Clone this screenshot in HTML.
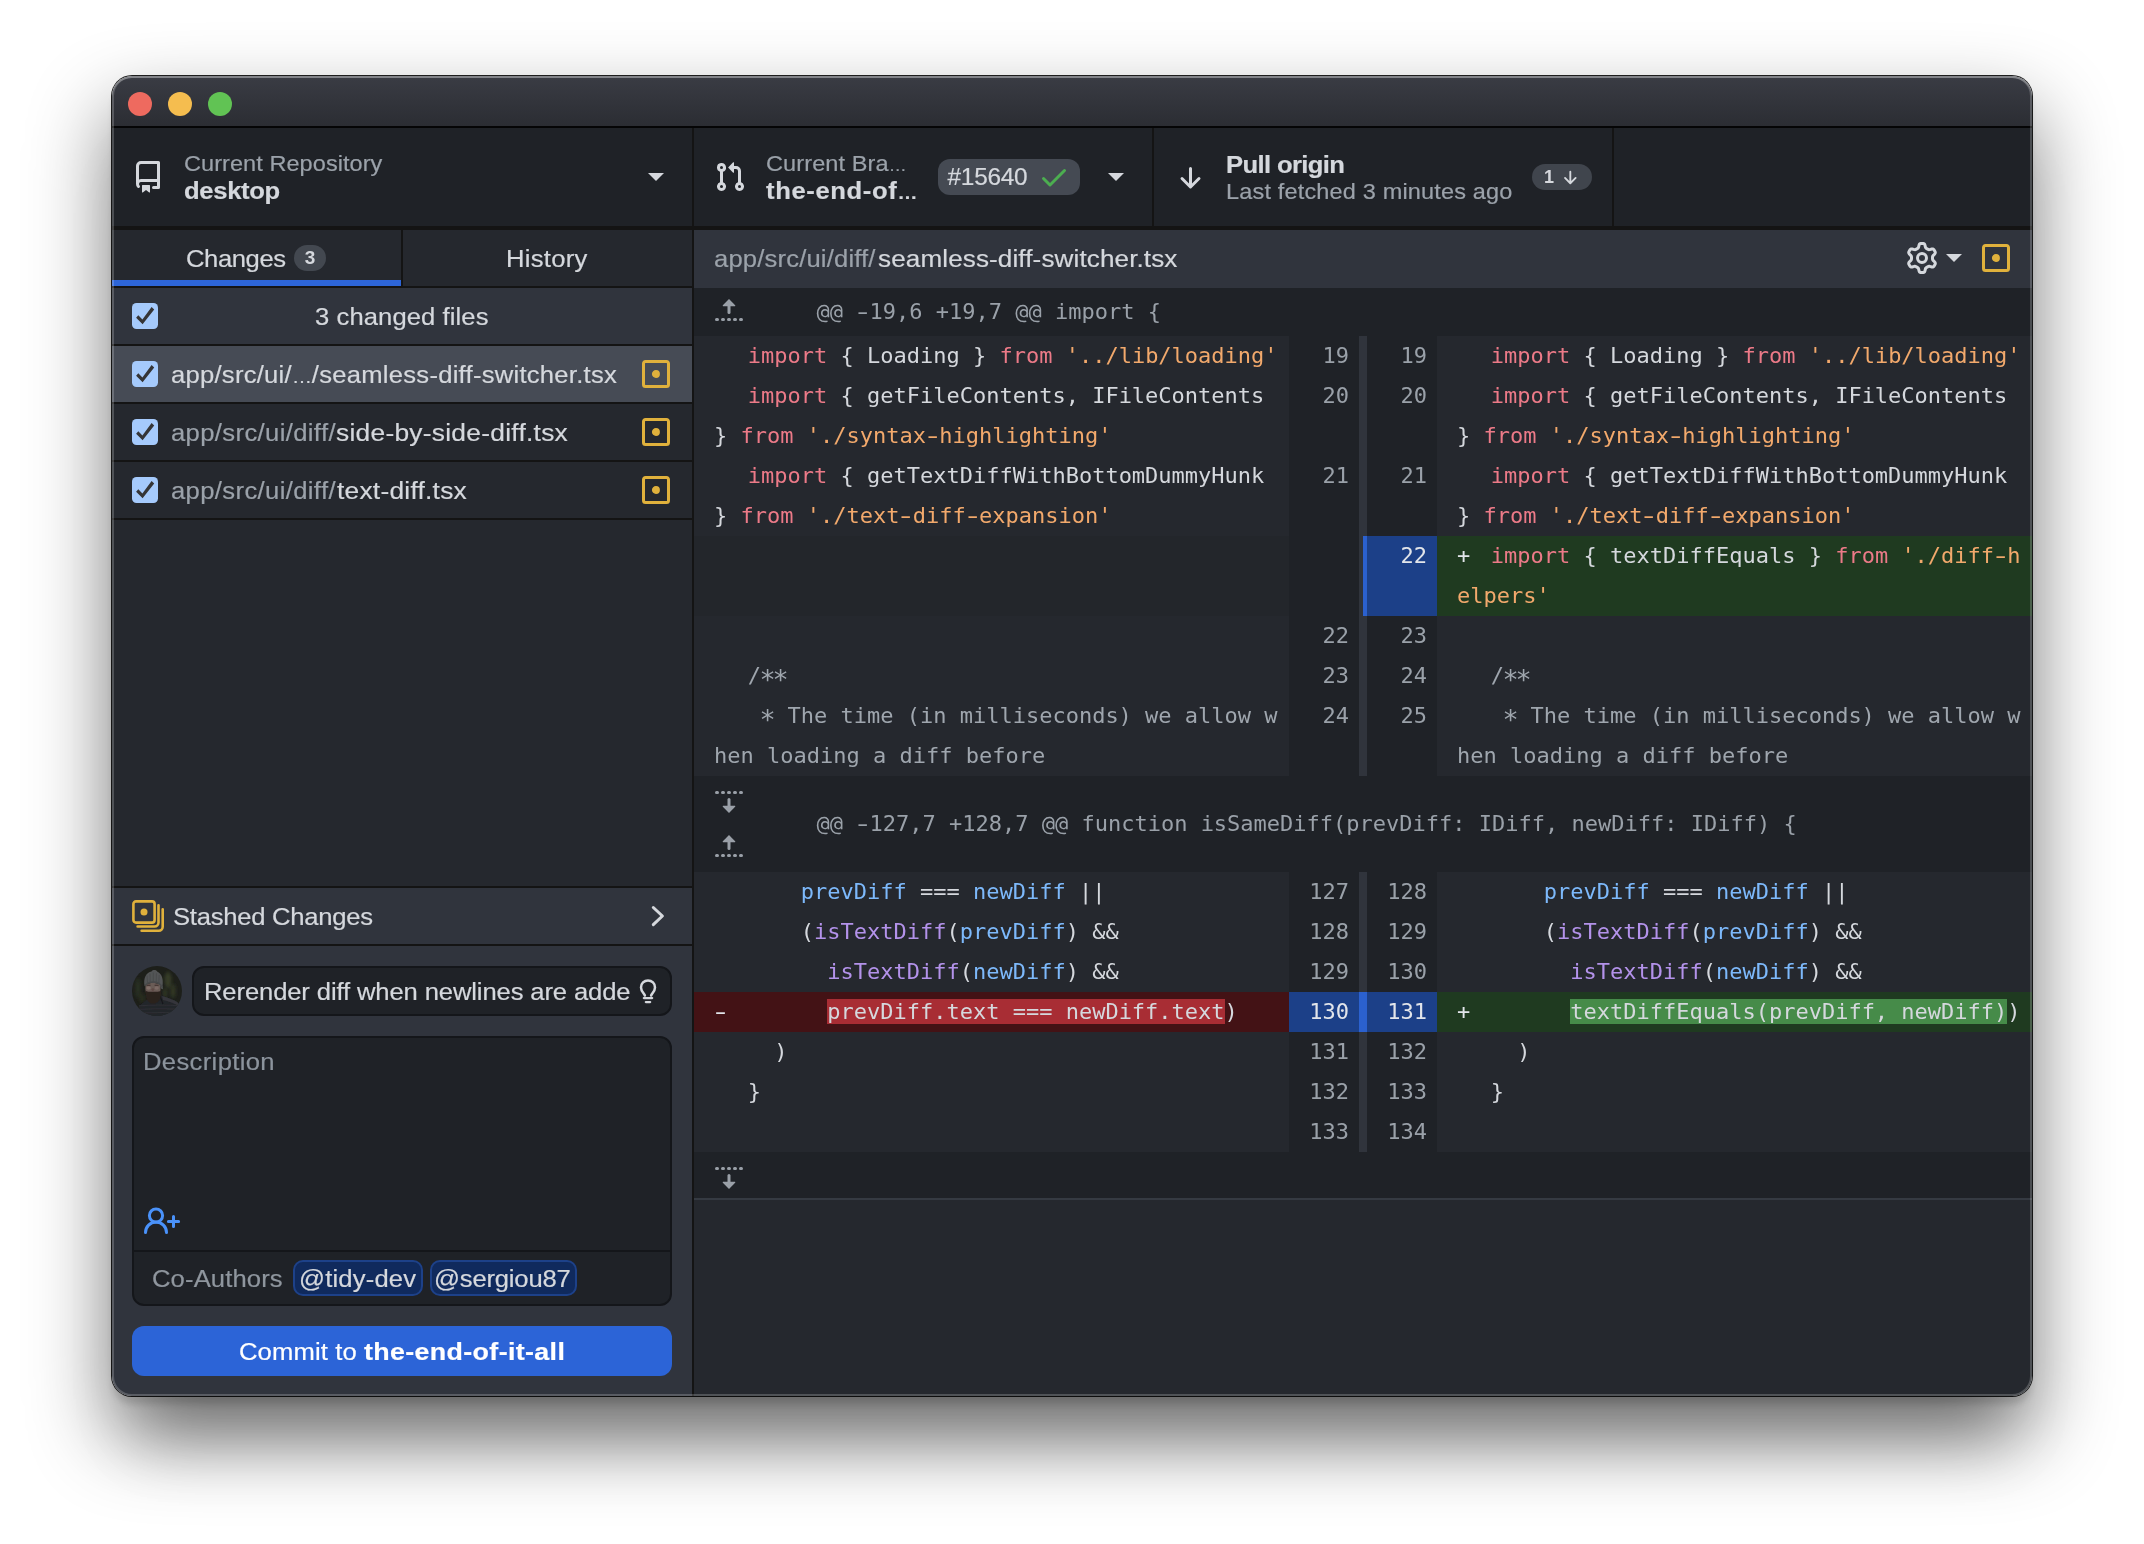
<!DOCTYPE html>
<html lang="en">
<head>
<meta charset="utf-8">
<title>GitHub Desktop</title>
<style>
html,body{margin:0;padding:0;}
html{width:2144px;height:1544px;background:#fff;}
body{width:2144px;height:1544px;background:#fff;position:relative;overflow:hidden;
  font-family:"Liberation Sans",sans-serif;font-size:24px;color:#d5d8dd;-webkit-font-smoothing:antialiased;}
#app div,#app svg{position:absolute;box-sizing:border-box;}
#shadow{position:absolute;left:112px;top:76px;width:1920px;height:1320px;border-radius:20px;
  box-shadow:0 0 0 1px rgba(0,0,0,.88), 0 9px 6px -1px rgba(0,0,0,.12), 0 70px 65px -35px rgba(0,0,0,.25), 0 38px 78px 6px rgba(0,0,0,.44);}
#app{position:absolute;left:0;top:0;width:2144px;height:1544px;
  clip-path:inset(76px 112px 148px 112px round 20px);background:#25282e;will-change:transform;}
#rim{position:absolute;left:112px;top:76px;width:1920px;height:1320px;border-radius:20px;
  box-shadow:inset 0 0 0 2px rgba(255,255,255,.2), inset 0 2px 0 0 rgba(255,255,255,.22);pointer-events:none;}
.t{white-space:pre;line-height:28px;height:28px;}
.b{font-weight:700;}
.sec{color:#9ba2aa;}
.mono{font-family:"DejaVu Sans Mono","Liberation Mono",monospace;font-size:22px;}
svg{display:block;}
/* title bar */
#titlebar{left:112px;top:76px;width:1920px;height:50px;background:linear-gradient(#393b43,#2b2d33);}
#tb-border{left:112px;top:126px;width:1920px;height:2px;background:#050505;}
.tl{width:24px;height:24px;border-radius:12px;top:92px;}
/* toolbar */
#toolbar{left:112px;top:128px;width:1920px;height:98px;background:#1f2227;}
#toolbar-border{left:112px;top:226px;width:1920px;height:4px;background:#141414;}
.vsep{width:2px;background:#141414;}
.pill{background:#454a53;border-radius:12px;}
/* sidebar */
#sidebar{left:112px;top:230px;width:580px;height:1166px;background:#25282e;}
.hline{height:2px;background:#141414;}
.cb{width:26px;height:26px;border-radius:5px;background:#a4c8fb;}
.row{left:112px;width:580px;height:56px;}
.boxalt{background:#30343d;}
/* diff */
.code{background:#25282e;}
.gut{background:#1f2227;}
.ln{font-family:"DejaVu Sans Mono","Liberation Mono",monospace;font-size:22px;color:#9aa1a9;white-space:pre;line-height:40px;height:40px;text-align:right;}
.cl{font-family:"DejaVu Sans Mono","Liberation Mono",monospace;font-size:22px;color:#d5d8dd;white-space:pre;line-height:40px;height:40px;}
.k{color:#ec7a88;}.s{color:#f2a96c;}.v{color:#7db9fb;}.f{color:#b392ea;}.c{color:#9fa6ae;}
.hy{display:inline-block;transform:scaleX(1.5);}
.as{display:inline-block;transform:translateY(4.5px) scale(1.22);}
</style>
</head>
<body>
<div id="shadow"></div>
<div id="app">
<div style="left:112px;top:76px;width:1920px;height:50px;background:linear-gradient(#3a3c44,#2b2d33);"></div>
<div style="left:112px;top:126px;width:1920px;height:2px;background:#050506;"></div>
<div style="left:128px;top:92px;width:24px;height:24px;background:#ee6a5f;border-radius:12px;"></div>
<div style="left:168px;top:92px;width:24px;height:24px;background:#f5bd4f;border-radius:12px;"></div>
<div style="left:208px;top:92px;width:24px;height:24px;background:#61c354;border-radius:12px;"></div>
<div style="left:112px;top:128px;width:1920px;height:98px;background:#1f2227;"></div>
<div style="left:112px;top:226px;width:1920px;height:4px;background:#141414;"></div>
<div style="left:692px;top:128px;width:2px;height:98px;background:#141414;"></div>
<div style="left:1152px;top:128px;width:2px;height:98px;background:#141414;"></div>
<div style="left:1612px;top:128px;width:2px;height:98px;background:#141414;"></div>
<svg style="left:132px;top:161px;" width="32" height="32" viewBox="0 0 16 16" fill="#d5d8dd" ><path d="M2 2.5A2.5 2.5 0 0 1 4.5 0h8.75a.75.75 0 0 1 .75.75v12.5a.75.75 0 0 1-.75.75h-2.5a.75.75 0 0 1 0-1.5h1.75v-2h-8a1 1 0 0 0-.714 1.7.75.75 0 1 1-1.072 1.05A2.495 2.495 0 0 1 2 11.5Zm10.5-1h-8a1 1 0 0 0-1 1v6.708A2.486 2.486 0 0 1 4.5 9h8ZM5 12.25a.25.25 0 0 1 .25-.25h3.5a.25.25 0 0 1 .25.25v3.25a.25.25 0 0 1-.4.2l-1.45-1.087a.249.249 0 0 0-.3 0L5.4 15.7a.25.25 0 0 1-.4-.2Z"/></svg>
<div class="t" id="tx_repo_desc" style="left:183.84px;top:150.13px;font-size:22.4px;color:#9ba2aa;transform:scaleX(1.05);transform-origin:0 0;-webkit-text-stroke:0.2px #9ba2aa;letter-spacing:0.060px;">Current Repository</div>
<div class="t" id="tx_repo_title" style="left:183.85px;top:176.68px;font-size:24.4px;color:#d5d8dd;transform:scaleX(1.05);transform-origin:0 0;-webkit-text-stroke:0.2px #d5d8dd;font-weight:700;letter-spacing:-0.308px;">desktop</div>
<svg style="left:648px;top:173px;" width="16" height="8" viewBox="0 0 16 8"><polygon points="0,0 16,0 8.0,8" fill="#d5d8dd"/></svg>
<svg style="left:714px;top:161px;" width="32" height="32" viewBox="0 0 16 16" fill="#d5d8dd" ><path fill-rule="evenodd" d="M7.177 3.073L9.573.677A.25.25 0 0110 .854v4.792a.25.25 0 01-.427.177L7.177 3.427a.25.25 0 010-.354zM3.75 2.5a.75.75 0 100 1.5.75.75 0 000-1.5zm-2.25.75a2.25 2.25 0 113 2.122v5.256a2.251 2.251 0 11-1.5 0V5.372A2.25 2.25 0 011.5 3.25zM11 2.5h-1V4h1a1 1 0 011 1v5.628a2.251 2.251 0 101.5 0V5A2.5 2.5 0 0011 2.5zm1 10.25a.75.75 0 111.5 0 .75.75 0 01-1.5 0zM3.75 12a.75.75 0 100 1.5.75.75 0 000-1.5z"/></svg>
<div class="t" id="tx_br_desc" style="left:765.84px;top:150.13px;font-size:22.4px;color:#9ba2aa;transform:scaleX(1.05);transform-origin:0 0;-webkit-text-stroke:0.2px #9ba2aa;letter-spacing:0.105px;">Current Bra<span style="font-size:17px;letter-spacing:0">…</span></div>
<div class="t" id="tx_br_title" style="left:766.14px;top:176.68px;font-size:24.4px;color:#d5d8dd;transform:scaleX(1.05);transform-origin:0 0;-webkit-text-stroke:0.2px #d5d8dd;font-weight:700;letter-spacing:0.591px;">the-end-of<span style="font-size:19px;letter-spacing:0">…</span></div>
<div style="left:938px;top:159px;width:142px;height:36px;background:#454a53;border-radius:12px;"></div>
<div class="t" id="tx_pr_num" style="left:947.56px;top:163.18px;font-size:24.4px;color:#d5d8dd;transform:scaleX(1.0);transform-origin:0 0;-webkit-text-stroke:0.2px #d5d8dd;letter-spacing:-0.260px;">#15640</div>
<svg style="left:1037.75px;top:161px;" width="32" height="32" viewBox="0 0 16 16" fill="#4cae50" ><path d="M13.78 4.22a.75.75 0 0 1 0 1.06l-7.25 7.25a.75.75 0 0 1-1.06 0L2.22 9.28a.751.751 0 0 1 .018-1.042.751.751 0 0 1 1.042-.018L6 10.94l6.72-6.72a.75.75 0 0 1 1.06 0Z"/></svg>
<svg style="left:1108px;top:173px;" width="16" height="8" viewBox="0 0 16 8"><polygon points="0,0 16,0 8.0,8" fill="#d5d8dd"/></svg>
<svg style="left:1174.1px;top:161.4px;" width="32" height="32" viewBox="0 0 16 16" fill="#d5d8dd" ><path d="M13.03 8.22a.75.75 0 0 1 0 1.06l-4.25 4.25a.75.75 0 0 1-1.06 0L3.47 9.28a.751.751 0 0 1 .018-1.042.751.751 0 0 1 1.042-.018l2.97 2.97V3.75a.75.75 0 0 1 1.5 0v7.44l2.97-2.97a.75.75 0 0 1 1.06 0Z"/></svg>
<div class="t" id="tx_pull_title" style="left:1225.84px;top:150.78px;font-size:24.4px;color:#d5d8dd;transform:scaleX(1.05);transform-origin:0 0;-webkit-text-stroke:0.2px #d5d8dd;font-weight:700;letter-spacing:-0.591px;">Pull origin</div>
<div class="t" id="tx_pull_desc" style="left:1225.54px;top:177.88px;font-size:22.4px;color:#9ba2aa;transform:scaleX(1.05);transform-origin:0 0;-webkit-text-stroke:0.2px #9ba2aa;letter-spacing:0.156px;">Last fetched 3 minutes ago</div>
<div style="left:1532px;top:164px;width:60px;height:26px;background:#40454d;border-radius:13px;"></div>
<div class="t" style="left:1544.00px;top:167.26px;font-size:18px;line-height:20px;height:20px;font-weight:700;">1</div>
<svg style="left:1560px;top:167.25px;" width="20" height="20" viewBox="0 0 16 16" fill="#d5d8dd" ><path d="M13.03 8.22a.75.75 0 0 1 0 1.06l-4.25 4.25a.75.75 0 0 1-1.06 0L3.47 9.28a.751.751 0 0 1 .018-1.042.751.751 0 0 1 1.042-.018l2.97 2.97V3.75a.75.75 0 0 1 1.5 0v7.44l2.97-2.97a.75.75 0 0 1 1.06 0Z"/></svg>
<div style="left:112px;top:230px;width:580px;height:1166px;background:#25282e;"></div>
<div style="left:692px;top:230px;width:2px;height:1166px;background:#141414;"></div>
<div style="left:401px;top:230px;width:2px;height:56px;background:#141414;"></div>
<div style="left:112px;top:280px;width:289px;height:6px;background:#2d65d8;"></div>
<div style="left:112px;top:286px;width:580px;height:2px;background:#141414;"></div>
<div class="t" id="tx_tab_changes" style="left:186.45px;top:244.93px;font-size:24.4px;color:#d5d8dd;transform:scaleX(1.05);transform-origin:0 0;-webkit-text-stroke:0.2px #d5d8dd;letter-spacing:-0.383px;">Changes</div>
<div style="left:294px;top:245px;width:32px;height:26px;background:#434850;border-radius:13px;"></div>
<div class="t" style="left:294.00px;top:248.02px;font-size:19px;line-height:20px;height:20px;font-weight:700;width:32px;text-align:center;">3</div>
<div class="t" id="tx_tab_history" style="left:505.87px;top:244.93px;font-size:24.4px;color:#d5d8dd;transform:scaleX(1.05);transform-origin:0 0;-webkit-text-stroke:0.2px #d5d8dd;letter-spacing:0.265px;">History</div>
<div style="left:112px;top:288px;width:580px;height:56px;background:#30343d;"></div>
<div style="left:112px;top:344px;width:580px;height:2px;background:#141414;"></div>
<div style="left:132px;top:303px;width:26px;height:26px;border-radius:4.5px;background:#a5cafc;"><svg style="left:0;top:0" width="26" height="26" viewBox="0 0 26 26"><polygon points="4.1,14.7 6.3,12.3 10.4,16.4 19.6,4.1 22.2,6.5 10.6,21.3" fill="#353537"/></svg></div>
<div class="t" id="tx_nfiles" style="left:315.17px;top:302.88px;font-size:24.4px;color:#d5d8dd;transform:scaleX(1.05);transform-origin:0 0;-webkit-text-stroke:0.2px #d5d8dd;letter-spacing:0.081px;">3 changed files</div>
<div style="left:112px;top:346px;width:580px;height:56px;background:#464b55;"></div>
<div style="left:112px;top:402px;width:580px;height:2px;background:#141414;"></div>
<div style="left:132px;top:361px;width:26px;height:26px;border-radius:4.5px;background:#a5cafc;"><svg style="left:0;top:0" width="26" height="26" viewBox="0 0 26 26"><polygon points="4.1,14.7 6.3,12.3 10.4,16.4 19.6,4.1 22.2,6.5 10.6,21.3" fill="#353537"/></svg></div>
<div class="t" id="tx_f1" style="left:171.30px;top:360.88px;font-size:24.4px;color:#d5d8dd;transform:scaleX(1.05);transform-origin:0 0;-webkit-text-stroke:0.2px #d5d8dd;letter-spacing:0.239px;">app/src/ui/<span style="font-size:19px;letter-spacing:0">…</span>/seamless-diff-switcher.tsx</div>
<svg style="left:640px;top:358px;" width="32" height="32" viewBox="0 0 16 16" fill="#e0b13c" ><path d="M13.25 1c.966 0 1.75.784 1.75 1.75v10.5A1.75 1.75 0 0 1 13.25 15H2.75A1.75 1.75 0 0 1 1 13.25V2.75C1 1.784 1.784 1 2.75 1ZM2.75 2.5a.25.25 0 0 0-.25.25v10.5c0 .138.112.25.25.25h10.5a.25.25 0 0 0 .25-.25V2.75a.25.25 0 0 0-.25-.25ZM8 10a2 2 0 1 1-.001-3.999A2 2 0 0 1 8 10Z"/></svg>
<div style="left:112px;top:460px;width:580px;height:2px;background:#141414;"></div>
<div style="left:132px;top:419px;width:26px;height:26px;border-radius:4.5px;background:#a5cafc;"><svg style="left:0;top:0" width="26" height="26" viewBox="0 0 26 26"><polygon points="4.1,14.7 6.3,12.3 10.4,16.4 19.6,4.1 22.2,6.5 10.6,21.3" fill="#353537"/></svg></div>
<div class="t" id="tx_f2a" style="left:171.38px;top:418.88px;font-size:24.4px;color:#9ba2aa;transform:scaleX(1.05);transform-origin:0 0;-webkit-text-stroke:0.2px #9ba2aa;letter-spacing:0.351px;">app/src/ui/diff/</div>
<div class="t" id="tx_f2b" style="left:335.96px;top:418.88px;font-size:24.4px;color:#d5d8dd;transform:scaleX(1.08);transform-origin:0 0;-webkit-text-stroke:0.2px #d5d8dd;letter-spacing:0.246px;">side-by-side-diff.tsx</div>
<svg style="left:640px;top:416px;" width="32" height="32" viewBox="0 0 16 16" fill="#e0b13c" ><path d="M13.25 1c.966 0 1.75.784 1.75 1.75v10.5A1.75 1.75 0 0 1 13.25 15H2.75A1.75 1.75 0 0 1 1 13.25V2.75C1 1.784 1.784 1 2.75 1ZM2.75 2.5a.25.25 0 0 0-.25.25v10.5c0 .138.112.25.25.25h10.5a.25.25 0 0 0 .25-.25V2.75a.25.25 0 0 0-.25-.25ZM8 10a2 2 0 1 1-.001-3.999A2 2 0 0 1 8 10Z"/></svg>
<div style="left:112px;top:518px;width:580px;height:2px;background:#141414;"></div>
<div style="left:132px;top:477px;width:26px;height:26px;border-radius:4.5px;background:#a5cafc;"><svg style="left:0;top:0" width="26" height="26" viewBox="0 0 26 26"><polygon points="4.1,14.7 6.3,12.3 10.4,16.4 19.6,4.1 22.2,6.5 10.6,21.3" fill="#353537"/></svg></div>
<div class="t" id="tx_f3a" style="left:171.38px;top:476.88px;font-size:24.4px;color:#9ba2aa;transform:scaleX(1.05);transform-origin:0 0;-webkit-text-stroke:0.2px #9ba2aa;letter-spacing:0.351px;">app/src/ui/diff/</div>
<div class="t" id="tx_f3b" style="left:336.89px;top:476.88px;font-size:24.4px;color:#d5d8dd;transform:scaleX(1.08);transform-origin:0 0;-webkit-text-stroke:0.2px #d5d8dd;letter-spacing:0.223px;">text-diff.tsx</div>
<svg style="left:640px;top:474px;" width="32" height="32" viewBox="0 0 16 16" fill="#e0b13c" ><path d="M13.25 1c.966 0 1.75.784 1.75 1.75v10.5A1.75 1.75 0 0 1 13.25 15H2.75A1.75 1.75 0 0 1 1 13.25V2.75C1 1.784 1.784 1 2.75 1ZM2.75 2.5a.25.25 0 0 0-.25.25v10.5c0 .138.112.25.25.25h10.5a.25.25 0 0 0 .25-.25V2.75a.25.25 0 0 0-.25-.25ZM8 10a2 2 0 1 1-.001-3.999A2 2 0 0 1 8 10Z"/></svg>
<div style="left:112px;top:886px;width:580px;height:2px;background:#141414;"></div>
<div style="left:112px;top:888px;width:580px;height:56px;background:#30343d;"></div>
<div style="left:112px;top:944px;width:580px;height:2px;background:#141414;"></div>
<svg style="left:130px;top:898px" width="36" height="36" viewBox="0 0 36 36" fill="none" stroke="#e0b13c" stroke-width="2.6"><rect x="3.4" y="3.4" width="21.2" height="21.2" rx="2.6"/><circle cx="14" cy="14" r="3.5" fill="#e0b13c" stroke="none"/><path d="M28.5 7.2V24.6a3.9 3.9 0 0 1-3.9 3.9H7.6" stroke-linecap="round"/><path d="M32.7 11.2V28.8a3.9 3.9 0 0 1-3.9 3.9H11.6" stroke-linecap="round"/></svg>
<div class="t" id="tx_stash" style="left:172.75px;top:902.68px;font-size:24.4px;color:#d5d8dd;transform:scaleX(1.05);transform-origin:0 0;-webkit-text-stroke:0.2px #d5d8dd;letter-spacing:-0.249px;">Stashed Changes</div>
<svg style="left:646px;top:900px" width="24" height="32" viewBox="0 0 24 32" fill="none" stroke="#d5d8dd" stroke-width="3" stroke-linecap="round" stroke-linejoin="round"><path d="M7.3 7.5L16.4 16L7.3 24.7"/></svg>
<div style="left:112px;top:946px;width:580px;height:450px;background:#30343d;"></div>
<svg style="left:132px;top:966px" width="50" height="50" viewBox="0 0 50 50"><defs><clipPath id="avc"><circle cx="25" cy="25" r="25"/></clipPath><filter id="avb" x="-20%" y="-20%" width="140%" height="140%"><feGaussianBlur stdDeviation="0.7"/></filter><filter id="avb2" x="-30%" y="-30%" width="160%" height="160%"><feGaussianBlur stdDeviation="1.6"/></filter></defs><g clip-path="url(#avc)"><rect width="50" height="50" fill="#1d1f1a"/><g filter="url(#avb2)"><ellipse cx="36" cy="14" rx="3.5" ry="8" fill="#343a27"/><ellipse cx="41" cy="25" rx="3" ry="7" fill="#2f3524"/><ellipse cx="6" cy="22" rx="3" ry="10" fill="#282d20"/><ellipse cx="33" cy="27" rx="2" ry="5" fill="#2f3624"/><ellipse cx="10" cy="32" rx="3" ry="5" fill="#252a1d"/></g><g filter="url(#avb)"><path d="M4 50C5 42 9 37 15.5 33.5L22 31L29.5 29.5C37 32 44 34.5 47 37.5L50 50Z" fill="#242529"/><path d="M30 30C37 32 44 34.5 47 37.5L48 41C42 37 36 35 31 34Z" fill="#34353a"/><path d="M7 39.8C20 38.8 34 38.8 46 39.6M5 43.4C20 42.6 36 42.6 48 43.2M6 47C20 46.4 36 46.4 47 46.8" stroke="#2e2f34" stroke-width="1.2" fill="none"/><path d="M28 30L31 38" stroke="#17181b" stroke-width="1.2"/><path d="M13.6 18.5C13 24 13.8 27 15 29L27.5 29C28.6 26 28.8 22 28.2 18.5L21 16.5Z" fill="#6b5b56"/><ellipse cx="16.6" cy="22" rx="2.2" ry="1.8" fill="#917f79" opacity=".6"/><ellipse cx="24.7" cy="22" rx="2.1" ry="1.7" fill="#8a7973" opacity=".55"/><path d="M14.5 19.2H18.5M22.6 19.2H26.6" stroke="#3b2f2c" stroke-width="1.1"/><ellipse cx="20.8" cy="23.6" rx="1.4" ry="1.3" fill="#5e4a45"/><path d="M13.7 24.5C13.5 30 15 35.5 19 37.2C21 38 23.5 37.6 25.5 36C28.6 33.5 29.6 29 28.9 24.5C27 26.2 24.5 25.6 21.2 25.7C18 25.6 15.5 26.3 13.7 24.5Z" fill="#2a211e"/><path d="M12.6 20.2C11 12 14.5 6.4 19.5 5.6C20.8 3.6 24.4 3.6 25.4 5.8C29.5 7.5 31.6 13 30.6 19.5L30.9 23.2L29 22.6C28.6 19.5 27.5 18.2 25 17.3C22 16.3 18.5 16.5 15.8 17.6C14 18.4 13.2 19.2 12.6 20.2Z" fill="#535556"/><path d="M15 9.5L15.5 16.8M18 7.5L18.2 16M21.2 6.5L21.2 15.8M24.4 7.2L24.2 16.2M27.2 9L26.8 17.2" stroke="#47494a" stroke-width=".8"/><path d="M13 19.6C15.5 16.6 19 15.9 22 16C25.5 16.1 28.5 17.6 30.3 21.5" stroke="#47494a" stroke-width="1.3" fill="none"/></g></g></svg>
<div style="left:192px;top:966px;width:480px;height:50px;background:#1f2227;border:2px solid #14161a;border-radius:12px;"></div>
<div class="t" id="tx_summary" style="left:203.90px;top:977.78px;font-size:24.4px;color:#d5d8dd;transform:scaleX(1.05);transform-origin:0 0;-webkit-text-stroke:0.2px #d5d8dd;letter-spacing:-0.118px;">Rerender diff when newlines are adde</div>
<svg style="left:636px;top:976px" width="24" height="30" viewBox="0 0 24 30" fill="none" stroke="#d5d8dd" stroke-linecap="round" stroke-linejoin="round"><path d="M8.9 19.6C8.4 17.6 5.0 15.6 5.0 11.4a7 7 0 0 1 14 0C19 15.6 15.6 17.6 15.1 19.6" stroke-width="2.5"/><path d="M7.8 22.1H16.2" stroke-width="2.2"/><path d="M9.8 26.1H14.2" stroke-width="2.2"/></svg>
<div style="left:132px;top:1036px;width:540px;height:270px;background:#1f2227;border:2px solid #14161a;border-radius:12px;"></div>
<div class="t" id="tx_desc" style="left:143.31px;top:1047.68px;font-size:24.4px;color:#8c949d;transform:scaleX(1.05);transform-origin:0 0;-webkit-text-stroke:0.2px #8c949d;letter-spacing:0.331px;">Description</div>
<svg style="left:140px;top:1204px" width="44" height="34" viewBox="0 0 44 34" fill="none" stroke="#4a92fa" stroke-width="3" stroke-linecap="round"><circle cx="16" cy="11.6" r="6.6"/><path d="M5.5 28.6A10.5 10.5 0 0 1 26.5 28.6"/><path d="M28.4 17.5H38.6M33.5 12.6V22.4"/></svg>
<div style="left:134px;top:1250px;width:536px;height:2px;background:#14161a;"></div>
<div class="t" id="tx_coauth" style="left:152.15px;top:1264.58px;font-size:24.4px;color:#8f969e;transform:scaleX(1.05);transform-origin:0 0;-webkit-text-stroke:0.2px #8f969e;letter-spacing:0.122px;">Co-Authors</div>
<div style="left:293px;top:1260px;width:129.5px;height:36px;background:#102a5d;border:2px solid #1d4189;border-radius:10px;"></div>
<div class="t" id="tx_tag1" style="left:299.15px;top:1264.58px;font-size:24.4px;color:#d5d8dd;transform:scaleX(1.05);transform-origin:0 0;-webkit-text-stroke:0.2px #d5d8dd;letter-spacing:0.169px;">@tidy-dev</div>
<div style="left:430px;top:1260px;width:147px;height:36px;background:#102a5d;border:2px solid #1d4189;border-radius:10px;"></div>
<div class="t" id="tx_tag2" style="left:434.30px;top:1264.58px;font-size:24.4px;color:#d5d8dd;transform:scaleX(1.05);transform-origin:0 0;-webkit-text-stroke:0.2px #d5d8dd;letter-spacing:-0.182px;">@sergiou87</div>
<div style="left:132px;top:1326px;width:540px;height:50px;background:#2c64d7;border-radius:12px;"></div>
<div class="t" id="tx_commit_a" style="left:238.80px;top:1337.68px;font-size:24.4px;color:#ffffff;transform:scaleX(1.05);transform-origin:0 0;-webkit-text-stroke:0.2px #ffffff;letter-spacing:0.115px;">Commit to</div>
<div class="t" id="tx_commit_b" style="left:364.45px;top:1337.68px;font-size:24.4px;color:#ffffff;transform:scaleX(1.1);transform-origin:0 0;-webkit-text-stroke:0.2px #ffffff;font-weight:700;letter-spacing:0.319px;">the-end-of-it-all</div>
<div style="left:694px;top:230px;width:1338px;height:58px;background:#30343d;"></div>
<div class="t" id="tx_dh_a" style="left:714.09px;top:244.58px;font-size:24.4px;color:#9ba2aa;transform:scaleX(1.05);transform-origin:0 0;-webkit-text-stroke:0.2px #9ba2aa;letter-spacing:0.160px;">app/src/ui/diff/</div>
<div class="t" id="tx_dh_b" style="left:877.72px;top:244.58px;font-size:24.4px;color:#d5d8dd;transform:scaleX(1.07);transform-origin:0 0;-webkit-text-stroke:0.2px #d5d8dd;letter-spacing:0.097px;">seamless-diff-switcher.tsx</div>
<svg style="left:1906px;top:242px;" width="32" height="32" viewBox="0 0 16 16" fill="#d5d8dd" ><path d="M8 0a8.2 8.2 0 0 1 .701.031C9.444.095 9.99.645 10.16 1.29l.288 1.107c.018.066.079.158.212.224.231.114.454.243.668.386.123.082.233.09.299.071l1.103-.303c.644-.176 1.392.021 1.82.63.27.385.506.792.704 1.218.315.675.111 1.422-.364 1.891l-.814.806c-.049.048-.098.147-.088.294.016.257.016.515 0 .772-.01.147.038.246.088.294l.814.806c.475.469.679 1.216.364 1.891a7.977 7.977 0 0 1-.704 1.217c-.428.61-1.176.807-1.82.63l-1.102-.302c-.067-.019-.177-.011-.3.071a5.909 5.909 0 0 1-.668.386c-.133.066-.194.158-.211.224l-.29 1.106c-.168.646-.715 1.196-1.458 1.26a8.006 8.006 0 0 1-1.402 0c-.743-.064-1.289-.614-1.458-1.26l-.289-1.106c-.018-.066-.079-.158-.212-.224a5.738 5.738 0 0 1-.668-.386c-.123-.082-.233-.09-.299-.071l-1.103.303c-.644.176-1.392-.021-1.82-.63a8.12 8.12 0 0 1-.704-1.218c-.315-.675-.111-1.422.363-1.891l.815-.806c.05-.048.098-.147.088-.294a6.214 6.214 0 0 1 0-.772c.01-.147-.038-.246-.088-.294l-.815-.806C.635 6.045.431 5.298.746 4.623a7.92 7.92 0 0 1 .704-1.217c.428-.61 1.176-.807 1.82-.63l1.102.302c.067.019.177.011.3-.071.214-.143.437-.272.668-.386.133-.066.194-.158.211-.224l.29-1.106C6.009.645 6.556.095 7.299.03 7.53.01 7.764 0 8 0Zm-.571 1.525c-.036.003-.108.036-.137.146l-.289 1.105c-.147.561-.549.967-.998 1.189-.173.086-.34.183-.5.29-.417.278-.97.423-1.529.27l-1.103-.303c-.109-.03-.175.016-.195.045-.22.312-.412.644-.573.99-.014.031-.021.11.059.19l.815.806c.411.406.562.957.53 1.456a4.709 4.709 0 0 0 0 .582c.032.499-.119 1.05-.53 1.456l-.815.806c-.081.08-.073.159-.059.19.162.346.353.677.573.989.02.03.085.076.195.046l1.102-.303c.56-.153 1.113-.008 1.53.27.161.107.328.204.501.29.447.222.85.629.997 1.189l.289 1.105c.029.109.101.143.137.146a6.6 6.6 0 0 0 1.142 0c.036-.003.108-.036.137-.146l.289-1.105c.147-.561.549-.967.998-1.189.173-.086.34-.183.5-.29.417-.278.97-.423 1.529-.27l1.103.303c.109.029.175-.016.195-.045.22-.313.411-.644.573-.99.014-.031.021-.11-.059-.19l-.815-.806c-.411-.406-.562-.957-.53-1.456a4.709 4.709 0 0 0 0-.582c-.032-.499.119-1.05.53-1.456l.815-.806c.081-.08.073-.159.059-.19a6.464 6.464 0 0 0-.573-.989c-.02-.03-.085-.076-.195-.046l-1.102.303c-.56.153-1.113.008-1.53-.27a4.44 4.44 0 0 0-.501-.29c-.447-.222-.85-.629-.997-1.189l-.289-1.105c-.029-.11-.101-.143-.137-.146a6.6 6.6 0 0 0-1.142 0ZM11 8a3 3 0 1 1-6 0 3 3 0 0 1 6 0ZM9.5 8a1.5 1.5 0 1 0-3.001.001A1.5 1.5 0 0 0 9.500 8Z"/></svg>
<svg style="left:1946px;top:254px;" width="16" height="8" viewBox="0 0 16 8"><polygon points="0,0 16,0 8.0,8" fill="#d5d8dd"/></svg>
<svg style="left:1980px;top:242px;" width="32" height="32" viewBox="0 0 16 16" fill="#e0b13c" ><path d="M13.25 1c.966 0 1.75.784 1.75 1.75v10.5A1.75 1.75 0 0 1 13.25 15H2.75A1.75 1.75 0 0 1 1 13.25V2.75C1 1.784 1.784 1 2.75 1ZM2.75 2.5a.25.25 0 0 0-.25.25v10.5c0 .138.112.25.25.25h10.5a.25.25 0 0 0 .25-.25V2.75a.25.25 0 0 0-.25-.25ZM8 10a2 2 0 1 1-.001-3.999A2 2 0 0 1 8 10Z"/></svg>
<div style="left:694px;top:288px;width:1338px;height:910px;background:#1f2227;"></div>
<div style="left:694px;top:1198px;width:1338px;height:2px;background:#353a42;"></div>
<svg style="left:713px;top:296px" width="32" height="32" viewBox="0 0 32 32" fill="#9aa0a8"><rect x="2" y="22" width="4" height="3" rx="1.5"/><rect x="8" y="22" width="4" height="3" rx="1.5"/><rect x="14" y="22" width="4" height="3" rx="1.5"/><rect x="20" y="22" width="4" height="3" rx="1.5"/><rect x="26" y="22" width="4" height="3" rx="1.5"/><rect x="14.5" y="8" width="3" height="10" rx="1.5"/><polygon points="16,3 22.4,9.6 22,10.2 10,10.2 9.6,9.6"/></svg>
<div class="cl" style="left:816.5px;top:288px;line-height:48px;height:48px;color:#9aa1a9;">@@ <span class="hy">-</span>19,6 +19,7 @@ import {</div>
<div style="left:694px;top:336px;width:595px;height:40px;background:#25282e;"></div>
<div style="left:1437px;top:336px;width:595px;height:40px;background:#25282e;"></div>
<div style="left:1289px;top:336px;width:70px;height:40px;background:#1f2227;"></div>
<div style="left:1367px;top:336px;width:70px;height:40px;background:#1f2227;"></div>
<div style="left:1359px;top:336px;width:4px;height:40px;background:#30343c;"></div>
<div style="left:1363px;top:336px;width:4px;height:40px;background:#30343c;"></div>
<div class="ln" style="left:1289px;top:336px;width:60px">19</div>
<div class="ln" style="left:1367px;top:336px;width:60px">19</div>
<div class="cl" style="left:747.75px;top:336px;"><span class="k">import</span> { Loading } <span class="k">from</span> <span class="s">'../lib/loading'</span></div>
<div class="cl" style="left:1490.75px;top:336px;"><span class="k">import</span> { Loading } <span class="k">from</span> <span class="s">'../lib/loading'</span></div>
<div style="left:694px;top:376px;width:595px;height:80px;background:#25282e;"></div>
<div style="left:1437px;top:376px;width:595px;height:80px;background:#25282e;"></div>
<div style="left:1289px;top:376px;width:70px;height:80px;background:#1f2227;"></div>
<div style="left:1367px;top:376px;width:70px;height:80px;background:#1f2227;"></div>
<div style="left:1359px;top:376px;width:4px;height:80px;background:#30343c;"></div>
<div style="left:1363px;top:376px;width:4px;height:80px;background:#30343c;"></div>
<div class="ln" style="left:1289px;top:376px;width:60px">20</div>
<div class="ln" style="left:1367px;top:376px;width:60px">20</div>
<div class="cl" style="left:747.75px;top:376px;"><span class="k">import</span> { getFileContents, IFileContents </div>
<div class="cl" style="left:714px;top:416px;">} <span class="k">from</span> <span class="s">'./syntax<span class="hy">-</span>highlighting'</span></div>
<div class="cl" style="left:1490.75px;top:376px;"><span class="k">import</span> { getFileContents, IFileContents </div>
<div class="cl" style="left:1457px;top:416px;">} <span class="k">from</span> <span class="s">'./syntax<span class="hy">-</span>highlighting'</span></div>
<div style="left:694px;top:456px;width:595px;height:80px;background:#25282e;"></div>
<div style="left:1437px;top:456px;width:595px;height:80px;background:#25282e;"></div>
<div style="left:1289px;top:456px;width:70px;height:80px;background:#1f2227;"></div>
<div style="left:1367px;top:456px;width:70px;height:80px;background:#1f2227;"></div>
<div style="left:1359px;top:456px;width:4px;height:80px;background:#30343c;"></div>
<div style="left:1363px;top:456px;width:4px;height:80px;background:#30343c;"></div>
<div class="ln" style="left:1289px;top:456px;width:60px">21</div>
<div class="ln" style="left:1367px;top:456px;width:60px">21</div>
<div class="cl" style="left:747.75px;top:456px;"><span class="k">import</span> { getTextDiffWithBottomDummyHunk </div>
<div class="cl" style="left:714px;top:496px;">} <span class="k">from</span> <span class="s">'./text<span class="hy">-</span>diff<span class="hy">-</span>expansion'</span></div>
<div class="cl" style="left:1490.75px;top:456px;"><span class="k">import</span> { getTextDiffWithBottomDummyHunk </div>
<div class="cl" style="left:1457px;top:496px;">} <span class="k">from</span> <span class="s">'./text<span class="hy">-</span>diff<span class="hy">-</span>expansion'</span></div>
<div style="left:694px;top:536px;width:595px;height:80px;background:#23262b;"></div>
<div style="left:1437px;top:536px;width:595px;height:80px;background:#1f3a20;"></div>
<div style="left:1289px;top:536px;width:70px;height:80px;background:#1f2227;"></div>
<div style="left:1367px;top:536px;width:70px;height:80px;background:#1c4088;"></div>
<div style="left:1359px;top:536px;width:4px;height:80px;background:#30343c;"></div>
<div style="left:1363px;top:536px;width:4px;height:80px;background:#2b61cf;"></div>
<div class="ln" style="left:1367px;top:536px;width:60px;color:#e2e5ea">22</div>
<div class="cl" style="left:1457px;top:536px;color:#e2e5ea;">+</div>
<div class="cl" style="left:1490.75px;top:536px;"><span class="k">import</span> { textDiffEquals } <span class="k">from</span> <span class="s">'./diff<span class="hy">-</span>h</span></div>
<div class="cl" style="left:1457px;top:576px;"><span class="s">elpers'</span></div>
<div style="left:694px;top:616px;width:595px;height:40px;background:#25282e;"></div>
<div style="left:1437px;top:616px;width:595px;height:40px;background:#25282e;"></div>
<div style="left:1289px;top:616px;width:70px;height:40px;background:#1f2227;"></div>
<div style="left:1367px;top:616px;width:70px;height:40px;background:#1f2227;"></div>
<div style="left:1359px;top:616px;width:4px;height:40px;background:#30343c;"></div>
<div style="left:1363px;top:616px;width:4px;height:40px;background:#30343c;"></div>
<div class="ln" style="left:1289px;top:616px;width:60px">22</div>
<div class="ln" style="left:1367px;top:616px;width:60px">23</div>
<div class="cl" style="left:747.75px;top:616px;"></div>
<div class="cl" style="left:1490.75px;top:616px;"></div>
<div style="left:694px;top:656px;width:595px;height:40px;background:#25282e;"></div>
<div style="left:1437px;top:656px;width:595px;height:40px;background:#25282e;"></div>
<div style="left:1289px;top:656px;width:70px;height:40px;background:#1f2227;"></div>
<div style="left:1367px;top:656px;width:70px;height:40px;background:#1f2227;"></div>
<div style="left:1359px;top:656px;width:4px;height:40px;background:#30343c;"></div>
<div style="left:1363px;top:656px;width:4px;height:40px;background:#30343c;"></div>
<div class="ln" style="left:1289px;top:656px;width:60px">23</div>
<div class="ln" style="left:1367px;top:656px;width:60px">24</div>
<div class="cl" style="left:747.75px;top:656px;"><span class="c">/<span class="as">*</span><span class="as">*</span></span></div>
<div class="cl" style="left:1490.75px;top:656px;"><span class="c">/<span class="as">*</span><span class="as">*</span></span></div>
<div style="left:694px;top:696px;width:595px;height:80px;background:#25282e;"></div>
<div style="left:1437px;top:696px;width:595px;height:80px;background:#25282e;"></div>
<div style="left:1289px;top:696px;width:70px;height:80px;background:#1f2227;"></div>
<div style="left:1367px;top:696px;width:70px;height:80px;background:#1f2227;"></div>
<div style="left:1359px;top:696px;width:4px;height:80px;background:#30343c;"></div>
<div style="left:1363px;top:696px;width:4px;height:80px;background:#30343c;"></div>
<div class="ln" style="left:1289px;top:696px;width:60px">24</div>
<div class="ln" style="left:1367px;top:696px;width:60px">25</div>
<div class="cl" style="left:747.75px;top:696px;"><span class="c"> <span class="as">*</span> The time (in milliseconds) we allow w</span></div>
<div class="cl" style="left:714px;top:736px;"><span class="c">hen loading a diff before</span></div>
<div class="cl" style="left:1490.75px;top:696px;"><span class="c"> <span class="as">*</span> The time (in milliseconds) we allow w</span></div>
<div class="cl" style="left:1457px;top:736px;"><span class="c">hen loading a diff before</span></div>
<svg style="left:713px;top:784px" width="32" height="32" viewBox="0 0 32 32" fill="#9aa0a8"><rect x="2" y="7" width="4" height="3" rx="1.5"/><rect x="8" y="7" width="4" height="3" rx="1.5"/><rect x="14" y="7" width="4" height="3" rx="1.5"/><rect x="20" y="7" width="4" height="3" rx="1.5"/><rect x="26" y="7" width="4" height="3" rx="1.5"/><rect x="14.5" y="14" width="3" height="10" rx="1.5"/><polygon points="16,29 22.4,22.4 22,21.8 10,21.8 9.6,22.4"/></svg>
<svg style="left:713px;top:832px" width="32" height="32" viewBox="0 0 32 32" fill="#9aa0a8"><rect x="2" y="22" width="4" height="3" rx="1.5"/><rect x="8" y="22" width="4" height="3" rx="1.5"/><rect x="14" y="22" width="4" height="3" rx="1.5"/><rect x="20" y="22" width="4" height="3" rx="1.5"/><rect x="26" y="22" width="4" height="3" rx="1.5"/><rect x="14.5" y="8" width="3" height="10" rx="1.5"/><polygon points="16,3 22.4,9.6 22,10.2 10,10.2 9.6,9.6"/></svg>
<div class="cl" style="left:816.5px;top:776px;line-height:96px;height:96px;color:#9aa1a9;">@@ <span class="hy">-</span>127,7 +128,7 @@ function isSameDiff(prevDiff: IDiff, newDiff: IDiff) {</div>
<div style="left:694px;top:872px;width:595px;height:40px;background:#25282e;"></div>
<div style="left:1437px;top:872px;width:595px;height:40px;background:#25282e;"></div>
<div style="left:1289px;top:872px;width:70px;height:40px;background:#1f2227;"></div>
<div style="left:1367px;top:872px;width:70px;height:40px;background:#1f2227;"></div>
<div style="left:1359px;top:872px;width:4px;height:40px;background:#30343c;"></div>
<div style="left:1363px;top:872px;width:4px;height:40px;background:#30343c;"></div>
<div class="ln" style="left:1289px;top:872px;width:60px">127</div>
<div class="ln" style="left:1367px;top:872px;width:60px">128</div>
<div class="cl" style="left:747.75px;top:872px;">    <span class="v">prevDiff</span> === <span class="v">newDiff</span> ||</div>
<div class="cl" style="left:1490.75px;top:872px;">    <span class="v">prevDiff</span> === <span class="v">newDiff</span> ||</div>
<div style="left:694px;top:912px;width:595px;height:40px;background:#25282e;"></div>
<div style="left:1437px;top:912px;width:595px;height:40px;background:#25282e;"></div>
<div style="left:1289px;top:912px;width:70px;height:40px;background:#1f2227;"></div>
<div style="left:1367px;top:912px;width:70px;height:40px;background:#1f2227;"></div>
<div style="left:1359px;top:912px;width:4px;height:40px;background:#30343c;"></div>
<div style="left:1363px;top:912px;width:4px;height:40px;background:#30343c;"></div>
<div class="ln" style="left:1289px;top:912px;width:60px">128</div>
<div class="ln" style="left:1367px;top:912px;width:60px">129</div>
<div class="cl" style="left:747.75px;top:912px;">    (<span class="f">isTextDiff</span>(<span class="v">prevDiff</span>) &amp;&amp;</div>
<div class="cl" style="left:1490.75px;top:912px;">    (<span class="f">isTextDiff</span>(<span class="v">prevDiff</span>) &amp;&amp;</div>
<div style="left:694px;top:952px;width:595px;height:40px;background:#25282e;"></div>
<div style="left:1437px;top:952px;width:595px;height:40px;background:#25282e;"></div>
<div style="left:1289px;top:952px;width:70px;height:40px;background:#1f2227;"></div>
<div style="left:1367px;top:952px;width:70px;height:40px;background:#1f2227;"></div>
<div style="left:1359px;top:952px;width:4px;height:40px;background:#30343c;"></div>
<div style="left:1363px;top:952px;width:4px;height:40px;background:#30343c;"></div>
<div class="ln" style="left:1289px;top:952px;width:60px">129</div>
<div class="ln" style="left:1367px;top:952px;width:60px">130</div>
<div class="cl" style="left:747.75px;top:952px;">      <span class="f">isTextDiff</span>(<span class="v">newDiff</span>) &amp;&amp;</div>
<div class="cl" style="left:1490.75px;top:952px;">      <span class="f">isTextDiff</span>(<span class="v">newDiff</span>) &amp;&amp;</div>
<div style="left:694px;top:992px;width:595px;height:40px;background:#431215;"></div>
<div style="left:1437px;top:992px;width:595px;height:40px;background:#1f3a20;"></div>
<div style="left:1289px;top:992px;width:70px;height:40px;background:#1c4088;"></div>
<div style="left:1367px;top:992px;width:70px;height:40px;background:#1c4088;"></div>
<div style="left:1359px;top:992px;width:4px;height:40px;background:#2b61cf;"></div>
<div style="left:1363px;top:992px;width:4px;height:40px;background:#2b61cf;"></div>
<div class="ln" style="left:1289px;top:992px;width:60px;color:#e2e5ea">130</div>
<div class="ln" style="left:1367px;top:992px;width:60px;color:#e2e5ea">131</div>
<div class="cl" style="left:714px;top:992px;color:#e2e5ea;transform:scaleX(1.55);transform-origin:6.6px 0;">-</div>
<div class="cl" style="left:747.75px;top:992px;">      <span class="hl" style="background:#a82d34">prevDiff.text === newDiff.text</span>)</div>
<div class="cl" style="left:1457px;top:992px;color:#e2e5ea;">+</div>
<div class="cl" style="left:1490.75px;top:992px;">      <span class="hl" style="background:#468b49">textDiffEquals(prevDiff, newDiff)</span>)</div>
<div style="left:694px;top:1032px;width:595px;height:40px;background:#25282e;"></div>
<div style="left:1437px;top:1032px;width:595px;height:40px;background:#25282e;"></div>
<div style="left:1289px;top:1032px;width:70px;height:40px;background:#1f2227;"></div>
<div style="left:1367px;top:1032px;width:70px;height:40px;background:#1f2227;"></div>
<div style="left:1359px;top:1032px;width:4px;height:40px;background:#30343c;"></div>
<div style="left:1363px;top:1032px;width:4px;height:40px;background:#30343c;"></div>
<div class="ln" style="left:1289px;top:1032px;width:60px">131</div>
<div class="ln" style="left:1367px;top:1032px;width:60px">132</div>
<div class="cl" style="left:747.75px;top:1032px;">  )</div>
<div class="cl" style="left:1490.75px;top:1032px;">  )</div>
<div style="left:694px;top:1072px;width:595px;height:40px;background:#25282e;"></div>
<div style="left:1437px;top:1072px;width:595px;height:40px;background:#25282e;"></div>
<div style="left:1289px;top:1072px;width:70px;height:40px;background:#1f2227;"></div>
<div style="left:1367px;top:1072px;width:70px;height:40px;background:#1f2227;"></div>
<div style="left:1359px;top:1072px;width:4px;height:40px;background:#30343c;"></div>
<div style="left:1363px;top:1072px;width:4px;height:40px;background:#30343c;"></div>
<div class="ln" style="left:1289px;top:1072px;width:60px">132</div>
<div class="ln" style="left:1367px;top:1072px;width:60px">133</div>
<div class="cl" style="left:747.75px;top:1072px;">}</div>
<div class="cl" style="left:1490.75px;top:1072px;">}</div>
<div style="left:694px;top:1112px;width:595px;height:40px;background:#25282e;"></div>
<div style="left:1437px;top:1112px;width:595px;height:40px;background:#25282e;"></div>
<div style="left:1289px;top:1112px;width:70px;height:40px;background:#1f2227;"></div>
<div style="left:1367px;top:1112px;width:70px;height:40px;background:#1f2227;"></div>
<div style="left:1359px;top:1112px;width:4px;height:40px;background:#30343c;"></div>
<div style="left:1363px;top:1112px;width:4px;height:40px;background:#30343c;"></div>
<div class="ln" style="left:1289px;top:1112px;width:60px">133</div>
<div class="ln" style="left:1367px;top:1112px;width:60px">134</div>
<div class="cl" style="left:747.75px;top:1112px;"></div>
<div class="cl" style="left:1490.75px;top:1112px;"></div>
<svg style="left:713px;top:1160px" width="32" height="32" viewBox="0 0 32 32" fill="#9aa0a8"><rect x="2" y="7" width="4" height="3" rx="1.5"/><rect x="8" y="7" width="4" height="3" rx="1.5"/><rect x="14" y="7" width="4" height="3" rx="1.5"/><rect x="20" y="7" width="4" height="3" rx="1.5"/><rect x="26" y="7" width="4" height="3" rx="1.5"/><rect x="14.5" y="14" width="3" height="10" rx="1.5"/><polygon points="16,29 22.4,22.4 22,21.8 10,21.8 9.6,22.4"/></svg>
</div>
<div id="rim"></div>
</body>
</html>
